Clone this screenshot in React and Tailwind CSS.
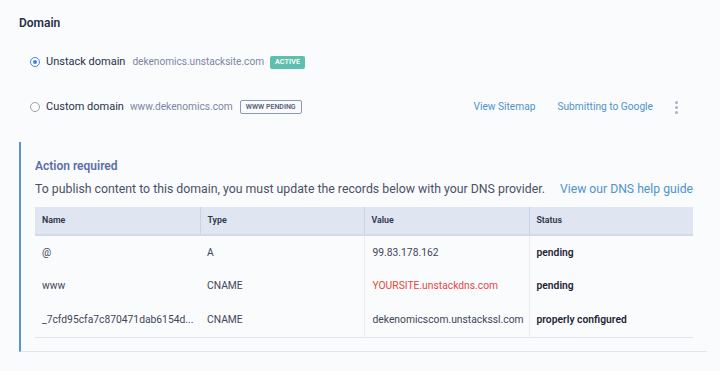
import React from 'react';

const records = [
  { name: '@', type: 'A', value: '99.83.178.162', status: 'pending' },
  { name: 'www', type: 'CNAME', value: 'YOURSITE.unstackdns.com', status: 'pending', red: true },
  { name: '_7cfd95cfa7c870471dab6154d...', type: 'CNAME', value: 'dekenomicscom.unstackssl.com', status: 'properly configured' },
];

const Radio = ({ checked }) => (
  <span
    className={`inline-block w-[10px] h-[10px] rounded-full border ${
      checked ? 'border-[#3b82f6] bg-white p-[2px]' : 'border-[#9aa0aa] bg-white'
    }`}
  >
    {checked && <span className="block w-full h-full rounded-full bg-[#3b82f6]" />}
  </span>
);

export default function App() {
  return (
    <div className="w-[720px] h-[371px] bg-[#fafbfd] font-['Roboto',sans-serif] text-[#273148] overflow-hidden">
      {/* Header */}
      <h2 className="pl-[19px] pt-[15px] text-[12px] font-semibold leading-[16px]">Domain</h2>

      {/* Unstack domain */}
      <div className="flex items-center pl-[30px] mt-[21px] h-[20px]">
        <Radio checked />
        <span className="ml-[6px] text-[11px]">Unstack domain</span>
        <span className="ml-[7px] text-[10.1px] text-[#7a86a3]">dekenomics.unstacksite.com</span>
        <span className="ml-[6px] px-[5px] h-[13px] leading-[13px] rounded-[2px] bg-[#5fbfae] text-white text-[7px] font-semibold tracking-[0.2px]">ACTIVE</span>
      </div>

      {/* Custom domain */}
      <div className="flex items-center pl-[30px] pr-[42px] mt-[25px] h-[20px]">
        <Radio />
        <span className="ml-[6px] text-[11px]">Custom domain</span>
        <span className="ml-[6px] text-[10.2px] text-[#7a86a3]">www.dekenomics.com</span>
        <span className="ml-[7px] px-[5px] h-[14px] leading-[12px] rounded-[2px] border border-[#8c98b8] text-[#56617e] text-[7px] font-semibold">WWW PENDING</span>
        <span className="ml-auto text-[10.2px] text-[#4f94c9]">View Sitemap</span>
        <span className="ml-[22px] text-[10.2px] text-[#4f94c9]">Submitting to Google</span>
        <span className="ml-[22px] flex flex-col gap-[2px]">
          <span className="block w-[3px] h-[3px] rounded-full bg-[#a9b1c4]" />
          <span className="block w-[3px] h-[3px] rounded-full bg-[#a9b1c4]" />
          <span className="block w-[3px] h-[3px] rounded-full bg-[#a9b1c4]" />
        </span>
      </div>

      {/* Action required box */}
      <div className="ml-[19px] mr-[13px] mt-[25px] border-l-2 border-[#5c93cf] border-b border-b-[#e1e5ee] pl-[14px] pr-[14px] pt-[16px] pb-[13px]">
        <div className="text-[12px] font-semibold text-[#5a6ea6] leading-[16px]">Action required</div>
        <div className="flex items-center mt-[7px] leading-[16px]">
          <span className="text-[12.3px] text-[#4a5164]">To publish content to this domain, you must update the records below with your DNS provider.</span>
          <span className="ml-auto text-[12.2px] text-[#4f94c9]">View our DNS help guide</span>
        </div>
        <table className="mt-[10px] w-full border-collapse text-[10.3px] table-fixed">
          <thead>
            <tr className="bg-[#dfe5f1] h-[28px] text-[8.8px] text-[#2c3449]">
              <th className="text-left font-semibold pl-[7px] w-[165px] border-r border-[#c9d2e4] border-b-2 border-b-[#d2daea]">Name</th>
              <th className="text-left font-semibold pl-[7px] w-[164px] border-r border-[#c9d2e4] border-b-2 border-b-[#d2daea]">Type</th>
              <th className="text-left font-semibold pl-[7px] w-[165px] border-r border-[#c9d2e4] border-b-2 border-b-[#d2daea]">Value</th>
              <th className="text-left font-semibold pl-[7px] border-b-2 border-b-[#d2daea]">Status</th>
            </tr>
          </thead>
          <tbody>
            {records.map((r, i) => (
              <tr key={i} className={`h-[34px] ${i === records.length - 1 ? 'border-b border-[#e1e5ee]' : ''}`}>
                <td className="pl-[7px] text-[#3e465a] truncate">{r.name}</td>
                <td className="pl-[7px] text-[#3e465a] border-r border-[#e8ebf2]">{r.type}</td>
                <td className={`pl-[8px] border-r border-[#e8ebf2] ${r.red ? 'text-[#e5483f]' : 'text-[#3e465a]'}`}>{r.value}</td>
                <td className="pl-[7px] font-semibold text-[#1f2638]">{r.status}</td>
              </tr>
            ))}
          </tbody>
        </table>
      </div>
    </div>
  );
}
